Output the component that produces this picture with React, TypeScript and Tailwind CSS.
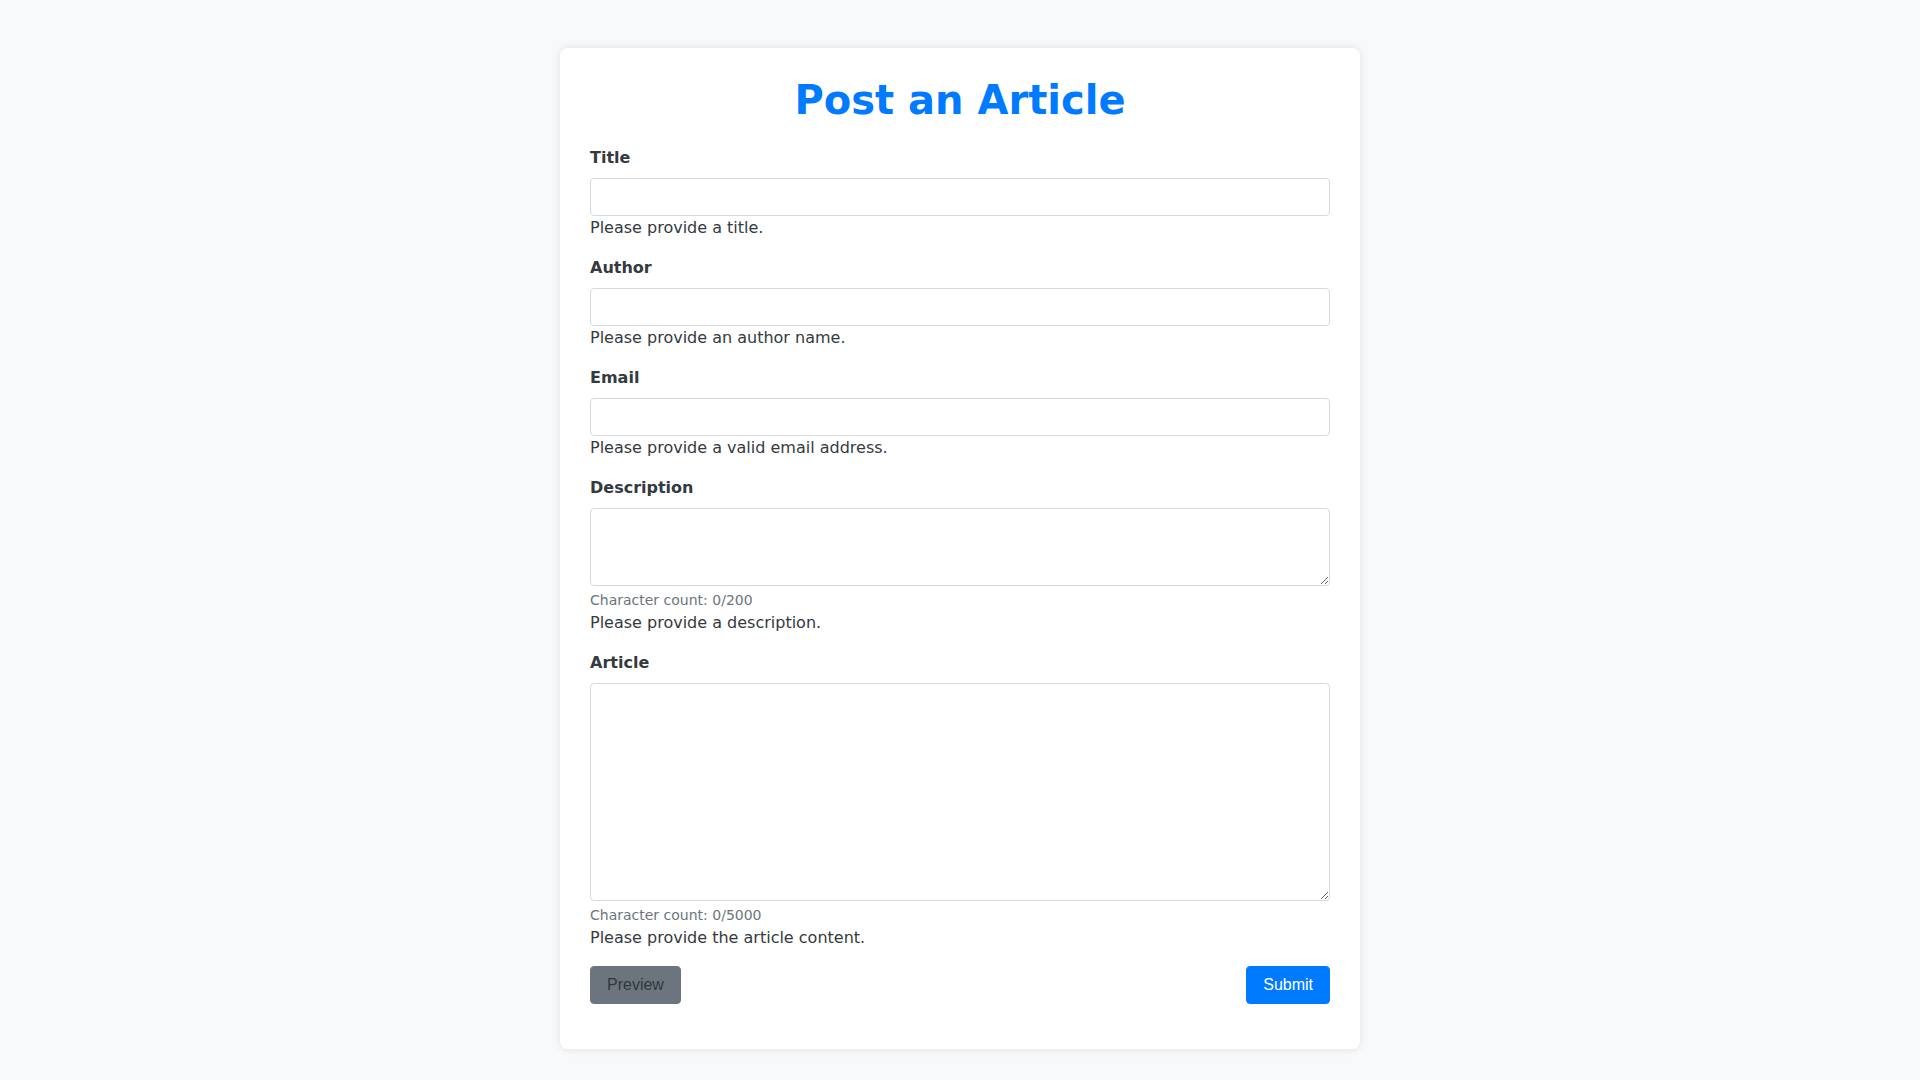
import React, { useState } from "react"

const SANS = "font-['DejaVu_Sans',sans-serif]"

interface FieldProps {
  label: string
  feedback: string
  multiline?: boolean
  heightClass?: string
  max?: number
  value: string
  onChange: (v: string) => void
}

function Field({ label, feedback, multiline, heightClass, max, value, onChange }: FieldProps) {
  return (
    <div className="mb-4">
      <label className="mb-2 block text-base leading-6 font-bold text-[#343a40]">{label}</label>
      {multiline ? (
        <textarea
          value={value}
          onChange={e => onChange(e.target.value)}
          maxLength={max}
          className={`block w-full rounded border border-[#d6d9dc] bg-white px-3 py-1.5 text-base outline-none ${heightClass}`}
        />
      ) : (
        <input
          value={value}
          onChange={e => onChange(e.target.value)}
          className="block h-[38px] w-full rounded border border-[#d6d9dc] bg-white px-3 text-base outline-none"
        />
      )}
      {max !== undefined && (
        <p className="mt-1 text-sm leading-[21px] text-[#6c757d]">
          Character count: {value.length}/{max}
        </p>
      )}
      <p className="text-base leading-6 text-[#343a40]">{feedback}</p>
    </div>
  )
}

export default function App() {
  const [title, setTitle] = useState("")
  const [author, setAuthor] = useState("")
  const [email, setEmail] = useState("")
  const [desc, setDesc] = useState("")
  const [article, setArticle] = useState("")

  return (
    <div className={`min-h-screen bg-[#f8f9fa] pt-12 ${SANS}`}>
      <div className="mx-auto w-[800px] rounded-lg bg-white px-[30px] pt-[28px] pb-[45px] shadow-[0_0_10px_rgba(0,0,0,0.1)]">
        <h1 className="mb-[22px] text-center text-[40px] leading-[48px] font-bold text-[#007bff]">Post an Article</h1>
        <form onSubmit={e => e.preventDefault()}>
          <Field label="Title" feedback="Please provide a title." value={title} onChange={setTitle} />
          <Field label="Author" feedback="Please provide an author name." value={author} onChange={setAuthor} />
          <Field label="Email" feedback="Please provide a valid email address." value={email} onChange={setEmail} />
          <Field
            label="Description"
            feedback="Please provide a description."
            multiline
            heightClass="h-[78px]"
            max={200}
            value={desc}
            onChange={setDesc}
          />
          <Field
            label="Article"
            feedback="Please provide the article content."
            multiline
            heightClass="h-[218px]"
            max={5000}
            value={article}
            onChange={setArticle}
          />
          <div className="flex items-center justify-between font-['Liberation_Sans',Arial,sans-serif]">
            <button
              type="button"
              className="h-[38px] rounded border border-[#6c757d] bg-[#6c757d] px-4 text-base text-[#32373c]"
            >
              Preview
            </button>
            <button
              type="submit"
              className="h-[38px] rounded border border-[#007bff] bg-[#007bff] px-4 text-base text-white"
            >
              Submit
            </button>
          </div>
        </form>
      </div>
    </div>
  )
}
